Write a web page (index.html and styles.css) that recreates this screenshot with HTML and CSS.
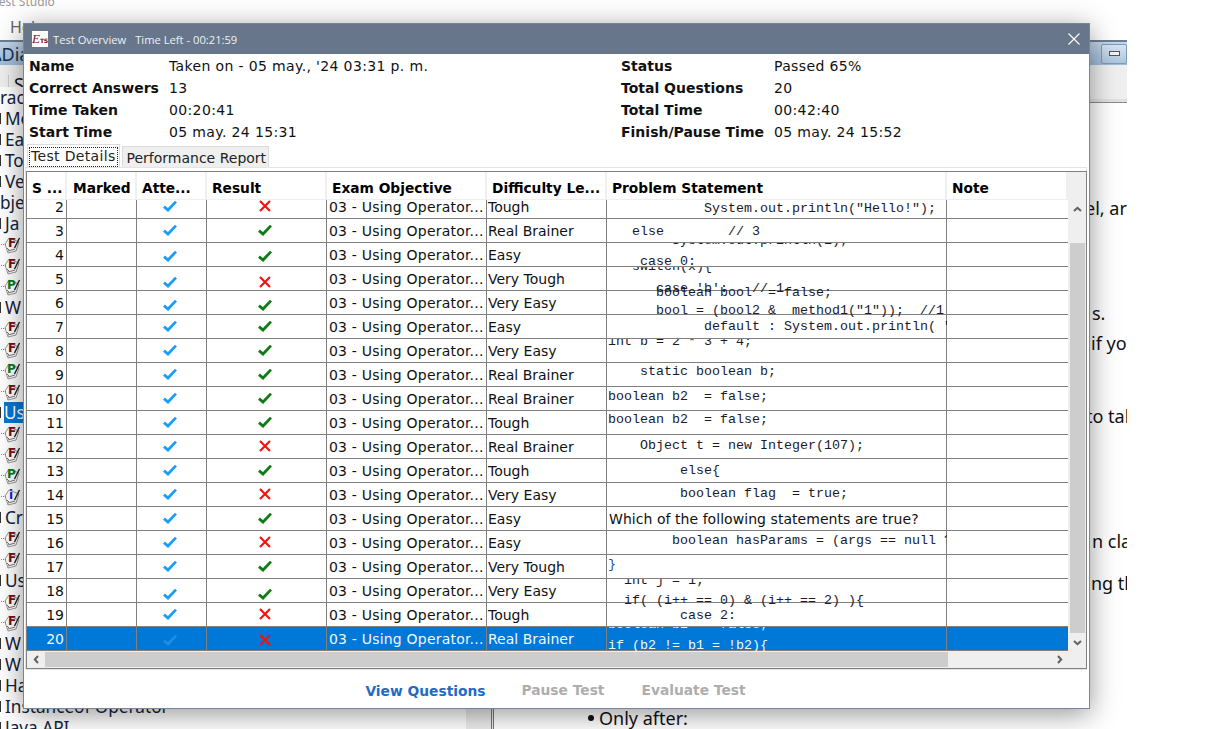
FILE: index.html
```html
<!DOCTYPE html>
<html lang="en">
<head>
<meta charset="utf-8">
<title>Test Overview</title>
<link rel="stylesheet" href="styles.css">
</head>
<body>
<svg class="defs" width="0" height="0" aria-hidden="true">
  <symbol id="chk" viewBox="0 0 14 12"><path d="M1 6.6 5 10 13 1.6" fill="none" stroke="currentColor" stroke-width="2.8"/></symbol>
  <symbol id="crs" viewBox="0 0 12 12"><path d="M1 1 11 11M11 1 1 11" fill="none" stroke="currentColor" stroke-width="2.2"/></symbol>
  <symbol id="paper" viewBox="0 0 20 20"><path d="M5 10 9 4 19 8 16 17 8 19Z" fill="#fff" stroke="#9a9a9a"/><path d="M8 17 15 15M7 14 9 16" fill="none" stroke="#777"/><path d="M19.5 4 14.5 14" fill="none" stroke="#222" stroke-width="1.4"/></symbol>
</svg>

<div class="app">
  <div class="app-title">Test Studio</div>
  <div class="menu">Help</div>
  <div class="mdi-bar"><span class="mdi-name">ΔDia</span><span class="mdi-btn"><i></i></span></div>
  <div class="toolbar"><span class="tool-tab">S</span></div>
  <div class="workspace">
    <div class="tree">
      <div class="t">ract</div>
      <div class="t f">Mo</div>
      <div class="t f">Ea</div>
      <div class="t f">To</div>
      <div class="t f">Ve</div>
      <div class="t">bje</div>
      <div class="t f">Ja</div>
      <div class="t n"><svg><use href="#paper"/><text x="8" y="13" class="fl">F</text></svg></div>
      <div class="t n"><svg><use href="#paper"/><text x="8" y="13" class="fl">F</text></svg></div>
      <div class="t n"><svg><use href="#paper"/><text x="7" y="13" class="pl">P</text></svg></div>
      <div class="t f">W</div>
      <div class="t n"><svg><use href="#paper"/><text x="8" y="13" class="fl">F</text></svg></div>
      <div class="t n"><svg><use href="#paper"/><text x="8" y="13" class="fl">F</text></svg></div>
      <div class="t n"><svg><use href="#paper"/><text x="7" y="13" class="pl">P</text></svg></div>
      <div class="t n"><svg><use href="#paper"/><text x="8" y="13" class="fl">F</text></svg></div>
      <div class="t f"><span class="sel">Us</span></div>
      <div class="t n"><svg><use href="#paper"/><text x="8" y="13" class="fl">F</text></svg></div>
      <div class="t n"><svg><use href="#paper"/><text x="8" y="13" class="fl">F</text></svg></div>
      <div class="t n"><svg><use href="#paper"/><text x="7" y="13" class="pl">P</text></svg></div>
      <div class="t n"><svg><use href="#paper"/><text x="9" y="13" class="il">i</text></svg></div>
      <div class="t f">Cr</div>
      <div class="t n"><svg><use href="#paper"/><text x="8" y="13" class="fl">F</text></svg></div>
      <div class="t n"><svg><use href="#paper"/><text x="8" y="13" class="fl">F</text></svg></div>
      <div class="t f">Us</div>
      <div class="t n"><svg><use href="#paper"/><text x="8" y="13" class="fl">F</text></svg></div>
      <div class="t n"><svg><use href="#paper"/><text x="8" y="13" class="fl">F</text></svg></div>
      <div class="t f">W</div>
      <div class="t f">W</div>
      <div class="t f">Ha</div>
      <div class="t f">Instanceof Operator</div>
      <div class="t f">Java API</div>
    </div>
    <div class="split"></div>
    <div class="doc">
      <div class="d l1">el, ar</div>
      <div class="d l2">s.</div>
      <div class="d l3">if you</div>
      <div class="d l4">to talk</div>
      <div class="d l5">n cla</div>
      <div class="d l6">ng the</div>
      <div class="d l7"><span class="bul"></span>Only after:</div>
    </div>
  </div>
</div>

<section class="dialog">
  <header class="dlg-title">
    <span class="logo"><b>E</b><em>TS</em></span>
    <span class="dlg-name">Test Overview</span>
    <span class="dlg-time">Time Left - 00:21:59</span>
    <svg class="close" viewBox="0 0 12 12"><path d="M.5.5 11.5 11.5M11.5.5.5 11.5" stroke="#fff" fill="none" stroke-width="1.1"/></svg>
  </header>

  <div class="info">
    <b>Name</b><span>Taken on - 05 may., '24 03:31 p. m.</span><b>Status</b><span>Passed 65%</span>
    <b>Correct Answers</b><span>13</span><b>Total Questions</b><span>20</span>
    <b>Time Taken</b><span>00:20:41</span><b>Total Time</b><span>00:42:40</span>
    <b>Start Time</b><span>05 may. 24 15:31</span><b>Finish/Pause Time</b><span>05 may. 24 15:52</span>
  </div>

  <div class="tabs">
    <div class="tab active"><span>Test Details</span></div>
    <div class="tab">Performance Report</div>
  </div>

  <div class="panel">
    <div class="frame">
      <div class="grid-area">
        <div class="head">
          <div>S ...</div><div>Marked</div><div>Atte...</div><div>Result</div><div>Exam Objective</div><div>Difficulty Le...</div><div>Problem Statement</div><div>Note</div>
        </div>

        <div class="row first">
          <div class="c num">2</div><div class="c"></div><div class="c mid blue"><svg class="ck"><use href="#chk"/></svg></div><div class="c mid red"><svg class="xx"><use href="#crs"/></svg></div><div class="c txt obj">03 - Using Operator...</div><div class="c txt dif">Tough</div>
          <div class="c code"><span class="ln m1 i12">System.out.println("Hello!");</span></div><div class="c"></div>
        </div>
        <div class="row">
          <div class="c num">3</div><div class="c"></div><div class="c mid blue"><svg class="ck"><use href="#chk"/></svg></div><div class="c mid green"><svg class="ck"><use href="#chk"/></svg></div><div class="c txt obj">03 - Using Operator...</div><div class="c txt dif">Real Brainer</div>
          <div class="c code"><span class="ln m5 i3">else        // 3</span></div><div class="c"></div>
        </div>
        <div class="row">
          <div class="c num">4</div><div class="c"></div><div class="c mid blue"><svg class="ck"><use href="#chk"/></svg></div><div class="c mid green"><svg class="ck"><use href="#chk"/></svg></div><div class="c txt obj">03 - Using Operator...</div><div class="c txt dif">Easy</div>
          <div class="c code"><span class="ln n10 i8">System.out.println(1);</span><span class="ln m5 i4">case 0:</span></div><div class="c"></div>
        </div>
        <div class="row">
          <div class="c num">5</div><div class="c"></div><div class="c mid blue"><svg class="ck"><use href="#chk"/></svg></div><div class="c mid red"><svg class="xx"><use href="#crs"/></svg></div><div class="c txt obj">03 - Using Operator...</div><div class="c txt dif">Very Tough</div>
          <div class="c code"><span class="ln n8 i3">switch(x){</span><span class="ln m6 i6">case 'b':   // 1</span></div><div class="c"></div>
        </div>
        <div class="row">
          <div class="c num">6</div><div class="c"></div><div class="c mid blue"><svg class="ck"><use href="#chk"/></svg></div><div class="c mid green"><svg class="ck"><use href="#chk"/></svg></div><div class="c txt obj">03 - Using Operator...</div><div class="c txt dif">Very Easy</div>
          <div class="c code over"><span class="ln n6 i6">boolean bool  = false;</span><span class="ln m2 i6">bool = (bool2 &amp;  method1("1"));  //1</span></div><div class="c"></div>
        </div>
        <div class="row">
          <div class="c num">7</div><div class="c"></div><div class="c mid blue"><svg class="ck"><use href="#chk"/></svg></div><div class="c mid green"><svg class="ck"><use href="#chk"/></svg></div><div class="c txt obj">03 - Using Operator...</div><div class="c txt dif">Easy</div>
          <div class="c code"><span class="ln m4 i12">default : System.out.println( "Default");</span></div><div class="c"></div>
        </div>
        <div class="row">
          <div class="c num">8</div><div class="c"></div><div class="c mid blue"><svg class="ck"><use href="#chk"/></svg></div><div class="c mid green"><svg class="ck"><use href="#chk"/></svg></div><div class="c txt obj">03 - Using Operator...</div><div class="c txt dif">Very Easy</div>
          <div class="c code"><span class="ln n5">int b = 2 * 3 + 4;</span></div><div class="c"></div>
        </div>
        <div class="row">
          <div class="c num">9</div><div class="c"></div><div class="c mid blue"><svg class="ck"><use href="#chk"/></svg></div><div class="c mid green"><svg class="ck"><use href="#chk"/></svg></div><div class="c txt obj">03 - Using Operator...</div><div class="c txt dif">Real Brainer</div>
          <div class="c code"><span class="ln m1 i4">static boolean b;</span></div><div class="c"></div>
        </div>
        <div class="row">
          <div class="c num">10</div><div class="c"></div><div class="c mid blue"><svg class="ck"><use href="#chk"/></svg></div><div class="c mid green"><svg class="ck"><use href="#chk"/></svg></div><div class="c txt obj">03 - Using Operator...</div><div class="c txt dif">Real Brainer</div>
          <div class="c code"><span class="ln m2">boolean b2  = false;</span></div><div class="c"></div>
        </div>
        <div class="row">
          <div class="c num">11</div><div class="c"></div><div class="c mid blue"><svg class="ck"><use href="#chk"/></svg></div><div class="c mid green"><svg class="ck"><use href="#chk"/></svg></div><div class="c txt obj">03 - Using Operator...</div><div class="c txt dif">Tough</div>
          <div class="c code"><span class="ln m1">boolean b2  = false;</span></div><div class="c"></div>
        </div>
        <div class="row">
          <div class="c num">12</div><div class="c"></div><div class="c mid blue"><svg class="ck"><use href="#chk"/></svg></div><div class="c mid red"><svg class="xx"><use href="#crs"/></svg></div><div class="c txt obj">03 - Using Operator...</div><div class="c txt dif">Real Brainer</div>
          <div class="c code"><span class="ln m3 i4">Object t = new Integer(107);</span></div><div class="c"></div>
        </div>
        <div class="row">
          <div class="c num">13</div><div class="c"></div><div class="c mid blue"><svg class="ck"><use href="#chk"/></svg></div><div class="c mid green"><svg class="ck"><use href="#chk"/></svg></div><div class="c txt obj">03 - Using Operator...</div><div class="c txt dif">Tough</div>
          <div class="c code"><span class="ln m4 i9">else{</span></div><div class="c"></div>
        </div>
        <div class="row">
          <div class="c num">14</div><div class="c"></div><div class="c mid blue"><svg class="ck"><use href="#chk"/></svg></div><div class="c mid red"><svg class="xx"><use href="#crs"/></svg></div><div class="c txt obj">03 - Using Operator...</div><div class="c txt dif">Very Easy</div>
          <div class="c code"><span class="ln m3 i9">boolean flag  = true;</span></div><div class="c"></div>
        </div>
        <div class="row">
          <div class="c num">15</div><div class="c"></div><div class="c mid blue"><svg class="ck"><use href="#chk"/></svg></div><div class="c mid green"><svg class="ck"><use href="#chk"/></svg></div><div class="c txt obj">03 - Using Operator...</div><div class="c txt dif">Easy</div>
          <div class="c txt q">Which of the following statements are true?</div><div class="c"></div>
        </div>
        <div class="row">
          <div class="c num">16</div><div class="c"></div><div class="c mid blue"><svg class="ck"><use href="#chk"/></svg></div><div class="c mid red"><svg class="xx"><use href="#crs"/></svg></div><div class="c txt obj">03 - Using Operator...</div><div class="c txt dif">Easy</div>
          <div class="c code"><span class="ln m2 i8">boolean hasParams = (args == null ? false : true);</span></div><div class="c"></div>
        </div>
        <div class="row">
          <div class="c num">17</div><div class="c"></div><div class="c mid blue"><svg class="ck"><use href="#chk"/></svg></div><div class="c mid green"><svg class="ck"><use href="#chk"/></svg></div><div class="c txt obj">03 - Using Operator...</div><div class="c txt dif">Very Tough</div>
          <div class="c code"><span class="ln m2 brace">}</span></div><div class="c"></div>
        </div>
        <div class="row">
          <div class="c num">18</div><div class="c"></div><div class="c mid blue"><svg class="ck"><use href="#chk"/></svg></div><div class="c mid green"><svg class="ck"><use href="#chk"/></svg></div><div class="c txt obj">03 - Using Operator...</div><div class="c txt dif">Very Easy</div>
          <div class="c code"><span class="ln n6 i2">int j = 1;</span><span class="ln m4 i2">if( (i++ == 0) &amp; (i++ == 2) ){</span></div><div class="c"></div>
        </div>
        <div class="row">
          <div class="c num">19</div><div class="c"></div><div class="c mid blue"><svg class="ck"><use href="#chk"/></svg></div><div class="c mid red"><svg class="xx"><use href="#crs"/></svg></div><div class="c txt obj">03 - Using Operator...</div><div class="c txt dif">Tough</div>
          <div class="c code"><span class="ln m5 i9">case 2:</span></div><div class="c"></div>
        </div>
        <div class="row selected">
          <div class="c num">20</div><div class="c"></div><div class="c mid blue"><svg class="ck"><use href="#chk"/></svg></div><div class="c mid red"><svg class="xx"><use href="#crs"/></svg></div><div class="c txt obj">03 - Using Operator...</div><div class="c txt dif">Real Brainer</div>
          <div class="c code"><span class="ln n10">boolean b2  = false;</span><span class="ln m5">if (b2 != b1 = !b2){</span></div><div class="c"></div>
        </div>
      </div>

      <div class="vbar">
        <svg class="arr" viewBox="0 0 9 6"><path d="M1 5 4.5 1.8 8 5" fill="none" stroke="#606060" stroke-width="2"/></svg>
        <div class="vthumb"></div>
        <svg class="arr" viewBox="0 0 9 6"><path d="M1 1 4.5 4.2 8 1" fill="none" stroke="#606060" stroke-width="2"/></svg>
      </div>
      <div class="hbar">
        <svg class="arr-h" viewBox="0 0 6 9"><path d="M5 1 1.8 4.5 5 8" fill="none" stroke="#606060" stroke-width="2"/></svg>
        <div class="hthumb"></div>
        <svg class="arr-h" viewBox="0 0 6 9"><path d="M1 1 4.2 4.5 1 8" fill="none" stroke="#606060" stroke-width="2"/></svg>
      </div>
      <div class="corner"></div>
    </div>
  </div>

  <footer class="actions">
    <span class="act on">View Questions</span>
    <span class="act">Pause Test</span>
    <span class="act">Evaluate Test</span>
  </footer>
</section>
</body>
</html>
```

FILE: styles.css
```css
* { box-sizing: border-box; }
html, body { margin: 0; height: 100%; background: #fff; overflow: hidden; }
body { font-family: "DejaVu Sans", Verdana, sans-serif; color: #000; }
.defs { position: absolute; }

/* Background application window */
.app { width: 1127px; height: 729px; overflow: hidden; display: flex; flex-direction: column; background: #fff; }
.app-title { height: 14px; margin-top: -6px; margin-left: -7px; flex: none; font: 12px "Noto Sans", sans-serif; color: #999; line-height: 16px; }
.menu { height: 32px; flex: none; padding: 7px 0 0 10px; font: 16px "Noto Sans", sans-serif; color: #666; line-height: 24px; }
.mdi-bar { height: 25px; flex: none; display: flex; justify-content: space-between; align-items: center;
  background: linear-gradient(#c4d7eb, #9fbbd9); border-top: 2px solid #6f7f92; }
.mdi-name { font: 18px "Noto Sans", sans-serif; color: #17324f; margin-left: -10px; }
.mdi-btn { width: 26px; height: 20px; border: 1px solid #7e9ab9; border-radius: 2px; background: linear-gradient(#d7e4f2, #aec5de); display: flex; align-items: center; justify-content: center; }
.mdi-btn i { width: 11px; height: 5px; background: #f2f2f2; border: 1px solid #555; }
.toolbar { height: 38px; flex: none; background: #efefef; border-bottom: 1px solid #8a8a8a; box-shadow: inset 0 -3px 0 #e0e0e0; padding: 10px 0 0 8px; }
.tool-tab { display: block; width: 18px; height: 16px; font: 18px/18px "Noto Sans", sans-serif; color: #111; padding-left: 5px; border-left: 1px solid #ccc; }
.workspace { flex: 1; display: flex; min-height: 0; position: relative; }
.tree { width: 466px; flex: none; margin-top: -16px; background: #fff; }
.t { height: 21px; font: 17.2px/21px "Noto Sans", sans-serif; color: #13233b; white-space: nowrap; }
.t.f { padding-left: 5px; position: relative; }
.t.f::before { content: ""; position: absolute; left: 0; top: 5px; height: 11px; border-left: 1px solid #333; }
.t.n { padding-left: 0; position: relative; }
.t.n::before { content: ""; position: absolute; left: 1px; top: 10px; width: 5px; border-top: 1px dotted #888; }
.t svg { width: 20px; height: 20px; display: block; }
.fl, .pl, .il { font: bold 12px "DejaVu Sans", sans-serif; }
.fl { fill: #7a0f12; } .pl { fill: #0d7a1a; } .il { fill: #1414e0; }
.sel { display: inline-block; background: #0078d7; color: #fff; width: 19px; margin-left: -1px; }
.split { width: 28px; flex: none; background: #ececec; border-right: 3px double #777; }
.doc { flex: 1; display: grid; grid-template-rows: 105px 30px 73px 125px 42px 135px 30px; padding-top: 90px; min-width: 0; overflow: hidden; }
.d { font: 18px/30px "Noto Sans", sans-serif; color: #111; white-space: nowrap; }
.l1 { padding-left: 591px; }
.l2 { padding-left: 598px; }
.l3 { padding-left: 597px; }
.l4 { padding-left: 592px; }
.l5 { padding-left: 598px; }
.l6 { padding-left: 597px; }
.l7 { padding-left: 94px; display: flex; align-items: center; gap: 5px; }
.bul { width: 6px; height: 6px; border-radius: 50%; background: #111; }

/* Dialog */
.dialog { position: absolute; left: 23px; top: 23px; width: 1067px; height: 686px; background: #fff;
  border: 1px solid #75859b; box-shadow: 0 5px 26px rgba(0,0,0,.42); display: flex; flex-direction: column; }
.dlg-title { height: 30px; flex: none; background: #67768a; color: #eef1f4; display: flex; align-items: center; padding-left: 8px;
  font: 11.2px "Open Sans", sans-serif; }
.logo { width: 16px; height: 16px; background: #fff; color: #7d0c14; display: flex; align-items: baseline; margin-right: 5px; overflow: hidden; }
.logo b { font: italic 13px/16px "Liberation Serif", serif; }
.logo em { font: bold 6px/16px "DejaVu Sans", sans-serif; letter-spacing: -.3px; }
.dlg-time { margin-left: 9px; }
.close { width: 12px; height: 12px; margin-left: auto; margin-right: 9px; }

.info { flex: none; display: grid; grid-template-columns: 140px 452px 153px 1fr; grid-auto-rows: 22px; padding: 1px 0 0 5px; font-size: 14px; line-height: 22px; height: 90px; color: #111; }
.info b { font-weight: 700; white-space: nowrap; }
.info span { letter-spacing: .36px; white-space: nowrap; }

.tabs { flex: none; height: 23px; display: flex; align-items: flex-end; padding-left: 3px; font-size: 14px; }
.tab { height: 21px; padding: 0 2px 0 4px; line-height: 23px; background: #efefef; border: 1px solid #dcdcdc; border-bottom: 0; color: #222; margin-left: 2px; }
.tab.active { height: 23px; margin-left: 0; background: #fff; padding: 2px 1px 0; color: #222; line-height: 16px; }
.tab.active span { display: block; padding: 0 1px; border: 1px dotted #222; height: 20px; letter-spacing: .33px; white-space: nowrap; }

.panel { flex: none; height: 503px; margin: 0 2px 0 1px; border: 1px solid #e4e4e4; padding: 3px 0 1px 0; }
.frame { width: 1061px; height: 498px; border: 1px solid #808080; background: #efefef; display: grid; grid-template-columns: 1041px 18px; grid-template-rows: 479px 17px; }
.grid-area { overflow: hidden; background: #fff; }
.head, .row { display: grid; grid-template-columns: 40px 70px 70px 120px 160px 120px 340px 121px; }
.head { height: 28px; font-weight: 700; font-size: 13.75px; line-height: 32px; background: #efefef; }
.head div { background: #fff; padding-left: 5px; margin-right: 2px; height: 27px; white-space: nowrap; overflow: hidden; }
.head div:nth-child(2) { padding-left: 6px; }
.row { height: 24px; font-size: 14px; background: #fff; color: #111; border-bottom: 1px solid #808080; }
.row.first { height: 19px; }
.c { border-right: 1px solid #808080; min-width: 0; height: 100%; overflow: hidden; line-height: 25px; white-space: nowrap; }
.row.first .c.num, .row.first .c.txt { line-height: 14px; }
.c:last-child { border-right: 0; }
.num { text-align: right; padding-right: 2px; }
.mid { display: flex; align-items: center; justify-content: center; padding: 0 3px 1px 0; }
.row.first .mid { align-items: flex-start; padding-bottom: 0; }
.txt { padding-left: 2px; }
.obj { letter-spacing: .2px; }
.dif { padding-left: 1px; }
.q { letter-spacing: .05px; }
.blue { color: #1b9cf7; } .green { color: #0b7d14; } .red { color: #f01414; }
.ck { width: 14px; height: 12px; display: block; }
.xx { width: 12px; height: 12px; display: block; }
.code { overflow: visible; clip-path: inset(0 0 0 0); font: 13.33px/16px "Liberation Mono", monospace; color: #1a1a2a; }
.code.over { clip-path: inset(-4px 0 0 0); }
.ln { display: block; height: 16px; white-space: pre; padding-left: 1px; }
.i2 { padding-left: 17px; } .i3 { padding-left: 25px; } .i4 { padding-left: 33px; } .i6 { padding-left: 49px; }
.i8 { padding-left: 65px; } .i9 { padding-left: 73px; } .i12 { padding-left: 97px; }
.m1 { margin-top: 1px; } .m2 { margin-top: 2px; } .m3 { margin-top: 3px; } .m4 { margin-top: 4px; } .m5 { margin-top: 5px; } .m6 { margin-top: 6px; }
.n5 { margin-top: -5px; } .n6 { margin-top: -6px; } .n8 { margin-top: -8px; } .n10 { margin-top: -10px; }
.brace { color: #1f4f9a; }
.row.selected { background: #0078d7; color: #fff; }
.row.selected .c { color: #f2f7fc; }
.row.selected .blue { color: #1a8ee8; }
.row.selected .red { color: #f01414; }

.vbar { grid-row: 1; grid-column: 2; display: flex; flex-direction: column; align-items: center; padding-top: 34px; background: #efefef; }
.arr { width: 9px; height: 6px; flex: none; }
.vthumb { width: 15px; height: 390px; margin: 31px 0 7px; background: #cdcdcd; }
.hbar { grid-row: 2; grid-column: 1; display: flex; align-items: center; padding-left: 6px; background: #efefef; }
.arr-h { width: 6px; height: 9px; flex: none; }
.hthumb { width: 903px; height: 15px; margin: 0 109px 0 6px; background: #cdcdcd; }
.corner { grid-row: 2; grid-column: 2; background: #efefef; }

.actions { flex: 1; display: flex; justify-content: center; align-items: center; gap: 36px; font-size: 13.8px; font-weight: 700; color: #aeaeae; padding: 2px 2px 0 0; }
.act:last-child { margin-left: 1px; }
.act.on { color: #1f6cc4; padding-top: 1px; }
```
